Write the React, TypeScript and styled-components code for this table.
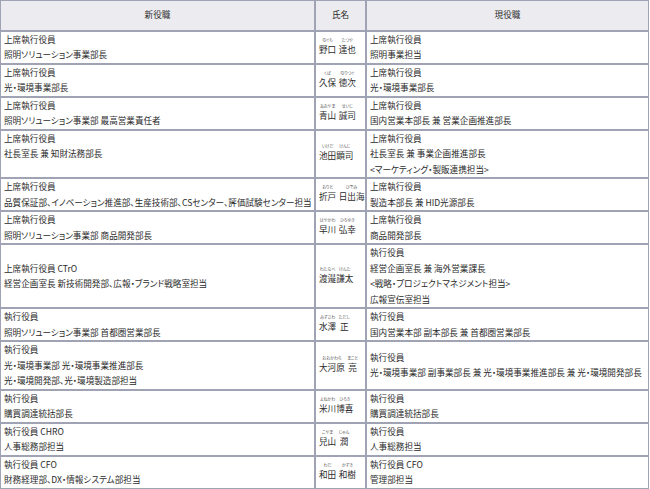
import styled, { createGlobalStyle } from "styled-components";

const GlobalStyle = createGlobalStyle`
  body {
    margin: 0;
    background: #ffffff;
    font-family: "Noto Sans CJK JP", "Noto Sans", sans-serif;
    color: #2b2b2b;
  }
`;

type Name = { kanji: string; kana: string }[];

interface Row {
  next: string[];
  name: Name;
  joined?: boolean;
  current: string[];
}

const rows: Row[] = [
  {
    next: ["上席執行役員", "照明ソリューション事業部長"],
    name: [{ kanji: "野口", kana: "のぐち" }, { kanji: "達也", kana: "たつや" }],
    current: ["上席執行役員", "照明事業担当"],
  },
  {
    next: ["上席執行役員", "光・環境事業部長"],
    name: [{ kanji: "久保", kana: "くぼ" }, { kanji: "徳次", kana: "のりつぐ" }],
    current: ["上席執行役員", "光・環境事業部長"],
  },
  {
    next: ["上席執行役員", "照明ソリューション事業部 最高営業責任者"],
    name: [{ kanji: "青山", kana: "あおやま" }, { kanji: "誠司", kana: "せいじ" }],
    current: ["上席執行役員", "国内営業本部長 兼 営業企画推進部長"],
  },
  {
    next: ["上席執行役員", "社長室長 兼 知財法務部長", ""],
    name: [{ kanji: "池田", kana: "いけだ" }, { kanji: "顕司", kana: "けんじ" }],
    joined: true,
    current: ["上席執行役員", "社長室長 兼 事業企画推進部長", "<マーケティング・製販連携担当>"],
  },
  {
    next: [
      "上席執行役員",
      "品質保証部、イノベーション推進部、生産技術部、CSセンター、評価試験センター担当",
    ],
    name: [{ kanji: "折戸", kana: "おりと" }, { kanji: "日出海", kana: "ひでみ" }],
    current: ["上席執行役員", "製造本部長 兼 HID光源部長"],
  },
  {
    next: ["上席執行役員", "照明ソリューション事業部 商品開発部長"],
    name: [{ kanji: "早川", kana: "はやかわ" }, { kanji: "弘幸", kana: "ひろゆき" }],
    current: ["上席執行役員", "商品開発部長"],
  },
  {
    next: ["上席執行役員 CTrO", "経営企画室長 新技術開発部、広報・ブランド戦略室担当"],
    name: [{ kanji: "渡邉", kana: "わたなべ" }, { kanji: "謙太", kana: "けんた" }],
    joined: true,
    current: [
      "執行役員",
      "経営企画室長 兼 海外営業課長",
      "<戦略・プロジェクトマネジメント担当>",
      "広報宣伝室担当",
    ],
  },
  {
    next: ["執行役員", "照明ソリューション事業部 首都圏営業部長"],
    name: [{ kanji: "水澤", kana: "みずさわ" }, { kanji: "正", kana: "ただし" }],
    current: ["執行役員", "国内営業本部 副本部長 兼 首都圏営業部長"],
  },
  {
    next: ["執行役員", "光・環境事業部 光・環境事業推進部長", "光・環境開発部、光・環境製造部担当"],
    name: [{ kanji: "大河原", kana: "おおかわら" }, { kanji: "亮", kana: "まこと" }],
    current: ["執行役員", "光・環境事業部 副事業部長 兼 光・環境事業推進部長 兼 光・環境開発部長"],
  },
  {
    next: ["執行役員", "購買調達統括部長"],
    name: [{ kanji: "米川", kana: "よねかわ" }, { kanji: "博喜", kana: "ひろき" }],
    joined: true,
    current: ["執行役員", "購買調達統括部長"],
  },
  {
    next: ["執行役員 CHRO", "人事総務部担当"],
    name: [{ kanji: "兒山", kana: "こやま" }, { kanji: "潤", kana: "じゅん" }],
    current: ["執行役員", "人事総務担当"],
  },
  {
    next: ["執行役員 CFO", "財務経理部、DX・情報システム部担当"],
    name: [{ kanji: "和田", kana: "わだ" }, { kanji: "和樹", kana: "かずき" }],
    current: ["執行役員 CFO", "管理部担当"],
  },
];

const Table = styled.table`
  width: 649px;
  table-layout: fixed;
  border-collapse: separate;
  border-spacing: 0;
  font-size: 8.6px;
  font-feature-settings: "palt";
`;

const HeadCell = styled.th`
  background: #ececf0;
  border: 1px solid #9fa3b4;
  font-weight: normal;
  text-align: center;
  line-height: 15.5px;
  padding: 6px 3px 7px;
  color: #2b2b2b;
`;

const Cell = styled.td`
  border: 1px solid #9fa3b4;
  vertical-align: middle;
  padding: 0 3px;
  line-height: 15.5px;
  white-space: nowrap;
  overflow: hidden;
`;

const NameCell = styled(Cell)`
  padding: 0 3px 2px;
`;

const NameRow = styled.div<{ $joined?: boolean }>`
  display: flex;
  align-items: flex-end;
  gap: ${(p) => (p.$joined ? "0" : "2.5px")};
`;

const Reading = styled.span`
  display: inline-flex;
  flex-direction: column;
  align-items: center;
`;

const Kana = styled.span`
  font-size: 4px;
  line-height: 6px;
  color: #555555;
  white-space: nowrap;
`;

const Kanji = styled.span`
  line-height: 13px;
`;

const Line = styled.div`
  min-height: 15.5px;
`;

export default function App() {
  return (
    <>
      <GlobalStyle />
      <Table>
        <colgroup>
          <col style={{ width: 315 }} />
          <col style={{ width: 51 }} />
          <col style={{ width: 283 }} />
        </colgroup>
        <thead>
          <tr>
            <HeadCell>新役職</HeadCell>
            <HeadCell>氏名</HeadCell>
            <HeadCell>現役職</HeadCell>
          </tr>
        </thead>
        <tbody>
          {rows.map((row, i) => (
            <tr key={i}>
              <Cell>
                {row.next.map((t, j) => (
                  <Line key={j}>{t}</Line>
                ))}
              </Cell>
              <NameCell>
                <NameRow $joined={row.joined}>
                  {row.name.map((part, j) => (
                    <Reading key={j}>
                      <Kana>{part.kana}</Kana>
                      <Kanji>{part.kanji}</Kanji>
                    </Reading>
                  ))}
                </NameRow>
              </NameCell>
              <Cell>
                {row.current.map((t, j) => (
                  <Line key={j}>{t}</Line>
                ))}
              </Cell>
            </tr>
          ))}
        </tbody>
      </Table>
    </>
  );
}
